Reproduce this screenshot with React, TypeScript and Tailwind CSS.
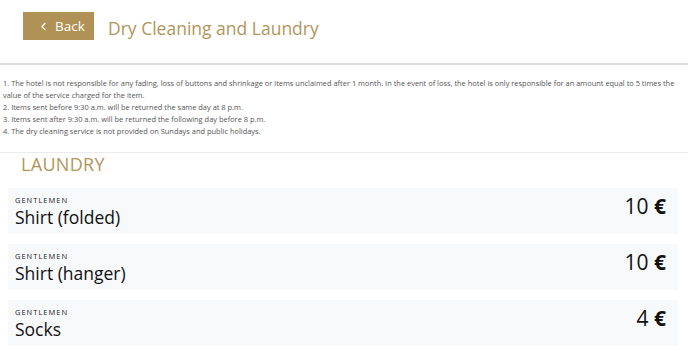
import { ChevronLeft } from "lucide-react"

const items = [
    { category: "GENTLEMEN", name: "Shirt (folded)", price: "10" },
    { category: "GENTLEMEN", name: "Shirt (hanger)", price: "10" },
    { category: "GENTLEMEN", name: "Socks", price: "4" },
]

const notes = [
    "1. The hotel is not responsible for any fading, loss of buttons and shrinkage or items unclaimed after 1 month. In the event of loss, the hotel is only responsible for an amount equal to 5 times the value of the service charged for the item.",
    "2. Items sent before 9:30 a.m. will be returned the same day at 8 p.m.",
    "3. Items sent after 9:30 a.m. will be returned the following day before 8 p.m.",
    "4. The dry cleaning service is not provided on Sundays and public holidays.",
]

const App = () => {
    return (
        <div className="w-[688px] h-[350px] overflow-hidden bg-white font-['Open_Sans',sans-serif]">
            {/* Header */}
            <header className="h-[65px] flex items-start px-[23px] pt-3 border-b-2 border-[#dcdcdf]">
                <button className="w-[71px] h-[28px] bg-[#b09256] text-white flex items-center pl-[14px] gap-[5px] text-[13.5px]">
                    <ChevronLeft size={13} strokeWidth={2} />
                    <span>Back</span>
                </button>
                <h1 className="ml-[14px] mt-[3px] text-[17.5px] text-[#b3955b]">Dry Cleaning and Laundry</h1>
            </header>

            {/* Notes */}
            <div className="px-[3px] pt-[12px] pb-[15px] text-[7.45px] leading-[12px] text-[#555] border-b border-[#ececec]">
                {notes.map((n) => (
                    <p key={n}>{n}</p>
                ))}
            </div>

            {/* Laundry */}
            <h2 className="pl-[21px] text-[18px] leading-[22px] tracking-[0.3px] text-[#b3955b]">LAUNDRY</h2>

            <div className="mt-[13px] px-2 w-[686px] flex flex-col gap-[10px]">
                {items.map((item) => (
                    <div key={item.name} className="h-[46px] bg-[#f8f9fb] flex items-center justify-between pl-[7px] pr-[12px]">
                        <div className="flex flex-col">
                            <span className="text-[7.5px] tracking-[1px] text-[#222] leading-[10px]">{item.category}</span>
                            <span className="text-[17.5px] leading-[22px] text-[#111] mt-[1px]">{item.name}</span>
                        </div>
                        <div className="text-[21px] text-[#111] mb-[8px]">
                            {item.price} <span className="font-bold">€</span>
                        </div>
                    </div>
                ))}
            </div>
        </div>
    )
}

export default App
